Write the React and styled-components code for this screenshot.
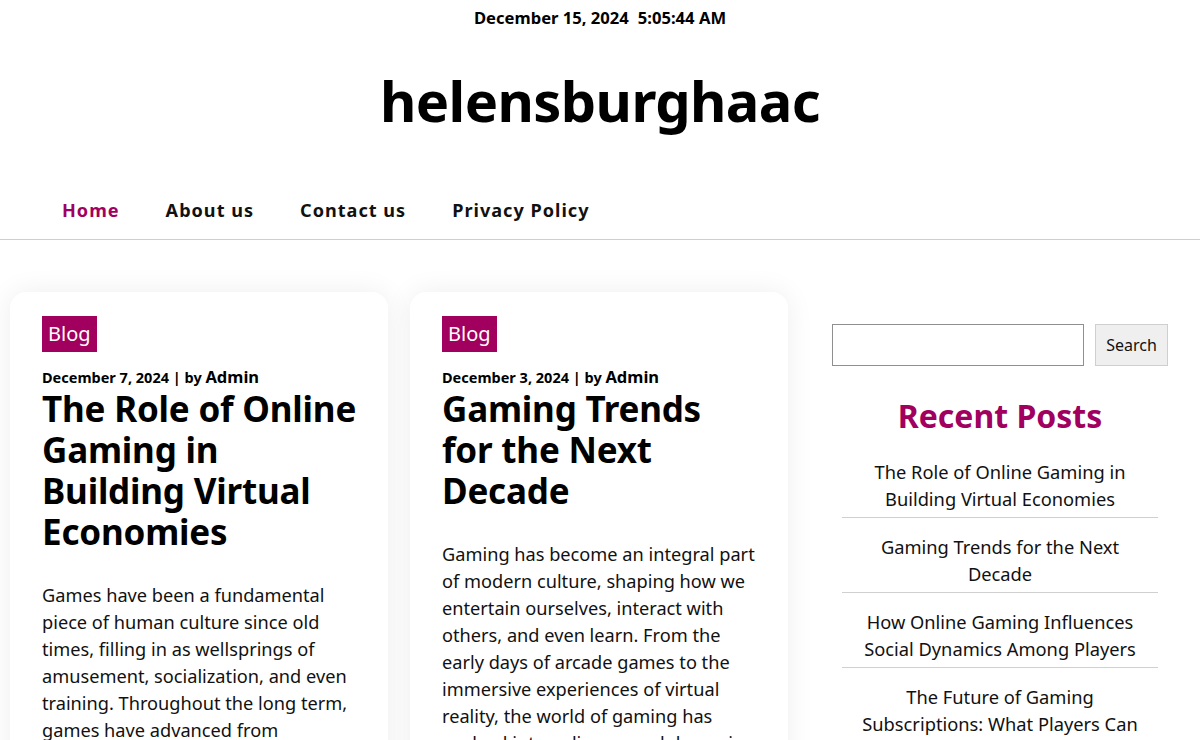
import React from "react";
import styled, { createGlobalStyle } from "styled-components";

const GlobalStyle = createGlobalStyle`
  html, body { margin: 0; padding: 0; background: #ffffff; }
  body { font-family: "Noto Sans", "Open Sans", sans-serif; color: #000; }
  * { box-sizing: border-box; }
`;

const PURPLE = "#a1005f";

const TopBar = styled.div`
  display: flex;
  justify-content: center;
  gap: 9px;
  font-weight: 700;
  font-size: 16.6px;
  line-height: 22px;
  padding-top: 7px;
  height: 28px;
`;

const SiteTitle = styled.h1`
  margin: 0;
  text-align: center;
  font-size: 56px;
  font-weight: 700;
  line-height: 80px;
  padding-top: 32px;
  height: 152px;
  letter-spacing: -0.6px;
`;

const Nav = styled.nav`
  display: flex;
  gap: 46px;
  padding: 17px 0 0 62px;
  height: 60px;
  align-items: flex-start;
  border-bottom: 1px solid #cfcfcf;
`;

const NavLink = styled.a`
  font-size: 18.1px;
  line-height: 26px;
  font-weight: 700;
  letter-spacing: 1px;
  color: ${(p) => (p.$active ? PURPLE : "#111")};
  text-decoration: none;
`;

const Layout = styled.div`
  display: flex;
  align-items: flex-start;
  padding: 52px 0 0 10px;
`;

const Posts = styled.main`
  display: flex;
  gap: 22px;
  align-items: flex-start;
`;

const Card = styled.article`
  width: 378px;
  background: #fff;
  border-radius: 16px;
  box-shadow: 0 0 28px rgba(20, 20, 60, 0.07);
  padding: 24px 30px 40px 32px;
`;

const Badge = styled.span`
  display: inline-block;
  background: ${PURPLE};
  color: #fff;
  font-size: 20px;
  line-height: 36px;
  padding: 0 6px;
`;

const Meta = styled.div`
  margin-top: 15px;
  font-size: 14.5px;
  font-weight: 700;
  line-height: 20px;
`;

const Author = styled.span`
  font-size: 16.5px;
`;

const PostTitle = styled.h2`
  margin: 1px 0 0;
  font-size: 35px;
  font-weight: 700;
  line-height: 41px;
  letter-spacing: -0.2px;
`;

const Excerpt = styled.p`
  margin: 30px 0 0;
  font-size: 18.2px;
  line-height: 27px;
  color: #111;
`;

const Sidebar = styled.aside`
  width: 336px;
  margin-left: 44px;
  padding-top: 32px;
`;

const SearchRow = styled.form`
  display: flex;
  gap: 11px;
`;

const SearchInput = styled.input`
  flex: 1;
  height: 42px;
  border: 1px solid #8f8f8f;
  border-radius: 0;
  font-size: 16px;
`;

const SearchButton = styled.button`
  height: 42px;
  width: 73px;
  background: #efefef;
  border: 1px solid #cfcfcf;
  font-family: inherit;
  font-size: 16px;
  color: #111;
`;

const WidgetTitle = styled.h2`
  margin: 28px 0 20px;
  text-align: center;
  color: ${PURPLE};
  font-size: 32px;
  font-weight: 700;
  line-height: 44px;
`;

const RecentList = styled.ul`
  list-style: none;
  margin: 0 10px;
  padding: 0;
`;

const RecentItem = styled.li`
  text-align: center;
  font-size: 18.3px;
  line-height: 27px;
  padding: 15px 12px 5px;
  border-bottom: 1px solid #d0d0d0;
  color: #111;
  &:first-child { padding-top: 0; }
`;

const posts = [
  {
    date: "December 7, 2024",
    title: "The Role of Online Gaming in Building Virtual Economies",
    text:
      "Games have been a fundamental piece of human culture since old times, filling in as wellsprings of amusement, socialization, and even training. Throughout the long term, games have advanced from straightforward diversions to complex encounters.",
  },
  {
    date: "December 3, 2024",
    title: "Gaming Trends for the Next Decade",
    text:
      "Gaming has become an integral part of modern culture, shaping how we entertain ourselves, interact with others, and even learn. From the early days of arcade games to the immersive experiences of virtual reality, the world of gaming has evolved into a diverse and dynamic industry.",
  },
];

const recent = [
  "The Role of Online Gaming in Building Virtual Economies",
  "Gaming Trends for the Next Decade",
  "How Online Gaming Influences Social Dynamics Among Players",
  "The Future of Gaming Subscriptions: What Players Can Expect",
];

export default function App() {
  return (
    <>
      <GlobalStyle />
      <TopBar>
        <span>December 15, 2024</span>
        <span>5:05:44 AM</span>
      </TopBar>
      <SiteTitle>helensburghaac</SiteTitle>
      <Nav>
        <NavLink href="#" $active>Home</NavLink>
        <NavLink href="#">About us</NavLink>
        <NavLink href="#">Contact us</NavLink>
        <NavLink href="#">Privacy Policy</NavLink>
      </Nav>
      <Layout>
        <Posts>
          {posts.map((p) => (
            <Card key={p.title}>
              <Badge>Blog</Badge>
              <Meta>
                {p.date} | by <Author>Admin</Author>
              </Meta>
              <PostTitle>{p.title}</PostTitle>
              <Excerpt>{p.text}</Excerpt>
            </Card>
          ))}
        </Posts>
        <Sidebar>
          <SearchRow onSubmit={(e) => e.preventDefault()}>
            <SearchInput type="text" aria-label="Search" />
            <SearchButton type="submit">Search</SearchButton>
          </SearchRow>
          <WidgetTitle>Recent Posts</WidgetTitle>
          <RecentList>
            {recent.map((r) => (
              <RecentItem key={r}>{r}</RecentItem>
            ))}
          </RecentList>
        </Sidebar>
      </Layout>
    </>
  );
}
